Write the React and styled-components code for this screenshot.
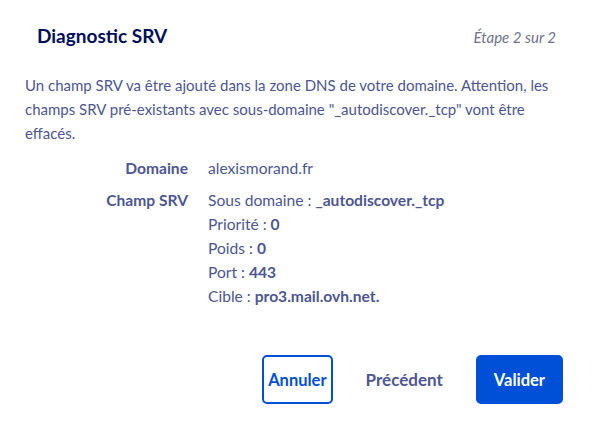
import React from "react";
import styled, { createGlobalStyle } from "styled-components";

const GlobalStyle = createGlobalStyle`
  html, body {
    margin: 0;
    padding: 0;
    background: #ffffff;
  }
  body {
    font-family: Lato, "Noto Sans", sans-serif;
    color: #4d5693;
  }
`;

const Modal = styled.div`
  width: 592px;
  height: 422px;
  box-sizing: border-box;
  padding: 24px 36px 0 25px;
  display: flex;
  flex-direction: column;
`;

const Header = styled.div`
  display: flex;
  align-items: baseline;
  justify-content: space-between;
  padding-left: 12px;
  line-height: 24px;
`;

const Title = styled.h2`
  margin: 0;
  font-size: 19px;
  font-weight: 700;
  color: #000e5c;
  line-height: 24px;
`;

const Step = styled.span`
  font-size: 15px;
  font-style: italic;
  color: #6e7389;
`;

const Intro = styled.p`
  margin: 24px -10px 0 0;
  font-size: 15px;
  line-height: 24px;
  white-space: nowrap;
`;

const Details = styled.dl`
  margin: 11px 0 0;
  display: grid;
  grid-template-columns: 163px 1fr;
  column-gap: 20px;
  row-gap: 8px;
  font-size: 15.6px;
  line-height: 24px;
`;

const Label = styled.dt`
  text-align: right;
  font-weight: 700;
`;

const Value = styled.dd`
  margin: 0;
  display: flex;
  flex-direction: column;
`;

const Footer = styled.div`
  margin-top: auto;
  margin-bottom: 18px;
  margin-right: -7px;
  display: flex;
  justify-content: flex-end;
  align-items: center;
`;

const Button = styled.button`
  font-family: inherit;
  font-weight: 700;
  height: 49px;
  border-radius: 5px;
  cursor: pointer;
  box-sizing: border-box;
  padding: 0 ${(p) => p.$pad}px;
  border: 2px solid ${(p) => (p.$variant === "ghost" ? "transparent" : "#0050d7")};
  background: ${(p) => (p.$variant === "primary" ? "#0050d7" : "#ffffff")};
  color: ${(p) =>
    p.$variant === "primary" ? "#ffffff" : p.$variant === "ghost" ? "#4d5693" : "#0050d7"};
  font-size: ${(p) => (p.$variant === "ghost" ? 17 : 16.5)}px;
`;

const rows = [
  ["Sous domaine : ", "_autodiscover._tcp"],
  ["Priorité : ", "0"],
  ["Poids : ", "0"],
  ["Port : ", "443"],
  ["Cible : ", "pro3.mail.ovh.net."],
];

export default function App() {
  return (
    <>
      <GlobalStyle />
      <Modal>
        <Header>
          <Title>Diagnostic SRV</Title>
          <Step>Étape 2 sur 2</Step>
        </Header>
        <Intro>
          Un champ SRV va être ajouté dans la zone DNS de votre domaine. Attention, les
          <br />
          champs SRV pré-existants avec sous-domaine "_autodiscover._tcp" vont être
          <br />
          effacés.
        </Intro>
        <Details>
          <Label>Domaine</Label>
          <Value>alexismorand.fr</Value>
          <Label>Champ SRV</Label>
          <Value>
            {rows.map(([k, v]) => (
              <span key={k}>
                {k}
                <b>{v}</b>
              </span>
            ))}
          </Value>
        </Details>
        <Footer>
          <Button $variant="outline" $pad={4}>Annuler</Button>
          <Button $variant="ghost" $pad={31}>Précédent</Button>
          <Button $variant="primary" $pad={16}>Valider</Button>
        </Footer>
      </Modal>
    </>
  );
}
